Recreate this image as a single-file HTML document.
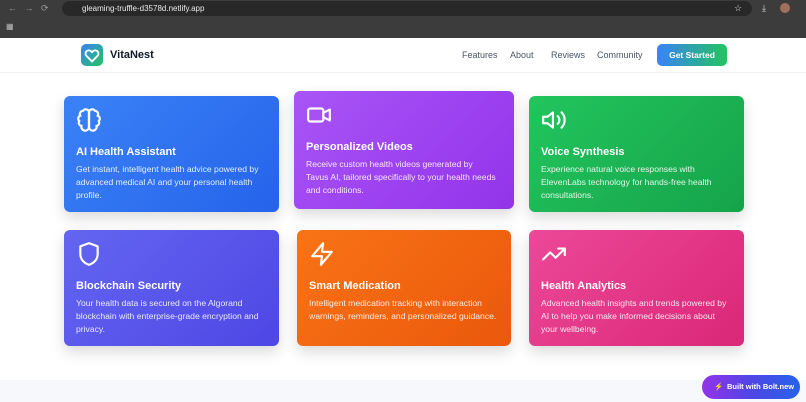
<!DOCTYPE html>
<html><head><meta charset="utf-8"><style>
*{margin:0;padding:0;box-sizing:border-box}
body{width:806px;height:402px;overflow:hidden;background:#fff;font-family:"Liberation Sans",sans-serif;position:relative}
.chrome{position:absolute;left:0;top:0;width:806px;height:38px;background:#3c3c3c}
.url{position:absolute;left:62px;top:1px;width:690px;height:15px;background:#282828;border-radius:8px;color:#e8e8e8;font-size:8px;line-height:15px;padding-left:20px}
.hdr{position:absolute;top:38px;left:0;width:806px;height:35px;background:#fff;border-bottom:1px solid #eef0f3}
.logo{position:absolute;left:81px;top:6px;width:22px;height:22px;border-radius:5px;background:linear-gradient(135deg,#3b82f6,#22c55e)}
.brand{position:absolute;left:110px;top:11px;font-weight:bold;font-size:11px;color:#111827}
.nav{position:absolute;top:12px;font-size:9px;color:#4b5563}
.btn{position:absolute;left:657px;top:6px;width:70px;height:22px;border-radius:5px;background:linear-gradient(90deg,#3b82f6,#22c55e);color:#fff;font-size:8.5px;font-weight:bold;text-align:center;line-height:22px}
.card{position:absolute;width:215px;height:116px;border-radius:6px;color:#fff;padding:12px 12px;box-shadow:0 6px 14px rgba(0,0,0,.15)}
.card svg{position:absolute;left:12px;top:11px}
.card h3{position:absolute;left:12px;top:50px;font-size:11px;font-weight:bold}
.card p{position:absolute;left:12px;top:67px;width:190px;font-size:8.6px;line-height:13px;opacity:.88}
.foot{position:absolute;top:380px;left:0;width:806px;height:22px;background:#f6f8fb}
.bolt{position:absolute;left:702px;top:375px;width:98px;height:24px;border-radius:12px;background:linear-gradient(90deg,#9333ea,#4f46e5,#2563eb);color:#fff;font-size:7.5px;font-weight:bold;line-height:24px;padding-left:25px}
</style></head><body>
<div class="chrome">
<div style="position:absolute;left:8px;top:3px;color:#999;font-size:9px">←&nbsp;&nbsp;&nbsp;→&nbsp;&nbsp;&nbsp;⟳</div>
<div class="url">gleaming-truffle-d3578d.netlify.app</div>
<div style="position:absolute;left:734px;top:3px;color:#ddd;font-size:9px">☆</div>
<div style="position:absolute;left:762px;top:3px;color:#ddd;font-size:9px">⤓</div>
<div style="position:absolute;left:780px;top:3px;width:10px;height:10px;border-radius:50%;background:#a0705a"></div>
<div style="position:absolute;left:6px;top:22px;color:#bbb;font-size:8px">▦</div>
</div>
<div class="hdr">
<div class="logo"><svg width="22" height="22" viewBox="0 0 24 24" fill="none" stroke="#fff" stroke-width="2"><path d="M12 19l-6-6a3.5 3.5 0 015-5l1 1 1-1a3.5 3.5 0 015 5z"/></svg></div>
<div class="brand">VitaNest</div>
<div class="nav" style="left:462px">Features</div>
<div class="nav" style="left:510px">About</div>
<div class="nav" style="left:551px">Reviews</div>
<div class="nav" style="left:597px">Community</div>
<div class="btn">Get Started</div>
</div>

<div class="card" style="left:64px;top:96px;background:linear-gradient(135deg,#3b82f6,#2563eb)">
<svg width="26" height="26" viewBox="0 0 24 24" fill="none" stroke="#fff" stroke-width="2" stroke-linecap="round"><path d="M12 5a3 3 0 00-5.5-1.5A3 3 0 004 8a3 3 0 00-1 5 3 3 0 002 4.5A3 3 0 0012 19z"/><path d="M12 5a3 3 0 015.5-1.5A3 3 0 0120 8a3 3 0 011 5 3 3 0 01-2 4.5A3 3 0 0112 19z"/><path d="M12 5v14"/></svg>
<h3>AI Health Assistant</h3><p>Get instant, intelligent health advice powered by advanced medical AI and your personal health profile.</p></div>
<div class="card" style="left:294px;top:91px;width:220px;height:118px;background:linear-gradient(135deg,#a855f7,#9333ea)">
<svg width="26" height="26" viewBox="0 0 24 24" fill="none" stroke="#fff" stroke-width="2" stroke-linejoin="round"><rect x="2" y="6" width="14" height="12" rx="2"/><path d="M16 10l6-3v10l-6-3z"/></svg>
<h3>Personalized Videos</h3><p>Receive custom health videos generated by Tavus AI, tailored specifically to your health needs and conditions.</p></div>
<div class="card" style="left:529px;top:96px;background:linear-gradient(135deg,#22c55e,#16a34a)">
<svg width="26" height="26" viewBox="0 0 24 24" fill="none" stroke="#fff" stroke-width="2" stroke-linejoin="round" stroke-linecap="round"><path d="M11 5L6 9H2v6h4l5 4z"/><path d="M15.5 8.5a5 5 0 010 7M19 5a10 10 0 010 14"/></svg>
<h3>Voice Synthesis</h3><p>Experience natural voice responses with ElevenLabs technology for hands-free health consultations.</p></div>
<div class="card" style="left:64px;top:230px;background:linear-gradient(135deg,#6366f1,#4f46e5)">
<svg width="26" height="26" viewBox="0 0 24 24" fill="none" stroke="#fff" stroke-width="2" stroke-linejoin="round"><path d="M12 2l8 3v7c0 5-3.5 8.5-8 10-4.5-1.5-8-5-8-10V5z"/></svg>
<h3>Blockchain Security</h3><p>Your health data is secured on the Algorand blockchain with enterprise-grade encryption and privacy.</p></div>
<div class="card" style="left:297px;top:230px;width:214px;background:linear-gradient(135deg,#f97316,#ea580c)">
<svg width="26" height="26" viewBox="0 0 24 24" fill="none" stroke="#fff" stroke-width="2" stroke-linejoin="round"><path d="M13 2L3 14h9l-1 8 10-12h-9z"/></svg>
<h3>Smart Medication</h3><p>Intelligent medication tracking with interaction warnings, reminders, and personalized guidance.</p></div>
<div class="card" style="left:529px;top:230px;background:linear-gradient(135deg,#ec4899,#db2777)">
<svg width="26" height="26" viewBox="0 0 24 24" fill="none" stroke="#fff" stroke-width="2" stroke-linejoin="round" stroke-linecap="round"><path d="M22 7l-8.5 8.5-5-5L2 17"/><path d="M16 7h6v6"/></svg>
<h3>Health Analytics</h3><p>Advanced health insights and trends powered by AI to help you make informed decisions about your wellbeing.</p></div>

<div class="foot"></div>
<div class="bolt"><span style="position:absolute;left:12px;color:#fb923c">⚡</span>Built with Bolt.new</div>
</body></html>
